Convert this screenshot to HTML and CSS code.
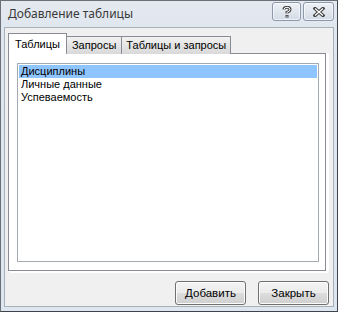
FILE: index.html
```
<html lang="ru">
  <head>
    <title>Добавление таблицы</title>
    <meta charset="utf-8">
    <link rel="stylesheet" href="styles.css">
  </head>
  <body>
    <div class="window">
      <div class="titlebar">
        <span class="titlebar__text">Добавление таблицы</span>
        <div class="titlebar__buttons">
          <div class="capbtn capbtn--help">
            <svg width="10" height="12" viewBox="0 0 10 12">
              <path d="M2 3.6 Q2 1.3 5 1.3 Q8 1.3 8 3.6 Q8 5.3 5 6.3 V7.6" fill="none" stroke="#444" stroke-width="3"/>
              <rect x="3.5" y="9" width="3" height="2.5" fill="#444"/>
              <path d="M2 3.6 Q2 1.3 5 1.3 Q8 1.3 8 3.6 Q8 5.3 5 6.3 V7.6" fill="none" stroke="#fff" stroke-width="1"/>
              <rect x="4.5" y="9.8" width="1" height="1" fill="#fff"/>
            </svg>
          </div>
          <div class="capbtn capbtn--close">
            <svg width="12" height="10" viewBox="0 0 12 10">
              <path d="M2 1.5 L10 8.5 M10 1.5 L2 8.5" stroke="#444" stroke-width="3.4" stroke-linecap="square"/>
              <path d="M2 1.5 L10 8.5 M10 1.5 L2 8.5" stroke="#fff" stroke-width="1.2"/>
            </svg>
          </div>
        </div>
      </div>

      <div class="client">
        <ul class="tabs">
          <li class="tab tab--active">Таблицы</li>
          <li class="tab">Запросы</li>
          <li class="tab tab--last">Таблицы и запросы</li>
        </ul>

        <div class="panel">
          <ul class="list">
            <li class="list__item list__item--selected">Дисциплины</li>
            <li class="list__item">Личные данные</li>
            <li class="list__item">Успеваемость</li>
          </ul>
        </div>

        <div class="actions">
          <button class="btn">Добавить</button>
          <button class="btn">Закрыть</button>
        </div>
      </div>
    </div>
  </body>
</html>
```

FILE: styles.css
```
html, body {
  margin: 0;
  padding: 0;
}

body {
  width: 338px;
  height: 312px;
  background-color: #ffffff;
  font-family: "Liberation Sans", Arial, sans-serif;
  font-size: 11px;
  color: #000;
}

ul {
  list-style-type: none;
  margin: 0;
  padding: 0;
}

.window {
  box-sizing: border-box;
  width: 338px;
  height: 312px;
  border: 1px solid #3f444c;
  border-top-color: #6b7078;
  border-left-color: #6b7078;
  background: linear-gradient(#e4e9f0, #dfe6ee 40px, #dde5ee);
  display: flex;
  flex-direction: column;
}

.titlebar {
  height: 26px;
  display: flex;
  align-items: flex-start;
  padding-left: 7px;
}

.titlebar__text {
  font-family: "Noto Sans", "Open Sans", sans-serif;
  font-size: 12px;
  color: #3a3a3a;
  margin-top: 4px;
}

.titlebar__buttons {
  margin-left: auto;
  margin-right: 3px;
  display: flex;
  gap: 2px;
  margin-top: 1px;
}

.capbtn {
  box-sizing: border-box;
  height: 19px;
  border: 1px solid #8c99aa;
  border-radius: 3px;
  background: linear-gradient(#eef2f7, #e1e7ee 50%, #d3dbe5);
  display: flex;
  align-items: center;
  justify-content: center;
  box-shadow: inset 0 0 0 1px rgba(255, 255, 255, 0.6);
}

.capbtn--help {
  width: 29px;
}

.capbtn--close {
  width: 31px;
}

.client {
  box-sizing: border-box;
  height: 280px;
  margin: 0 3px 0 3px;
  border: 1px solid #a7b1bd;
  background-color: #f0f0f0;
  padding: 5px 3px 0 3px;
}

.tabs {
  display: flex;
  align-items: flex-end;
  height: 20px;
  position: relative;
  z-index: 1;
}

.tab {
  box-sizing: border-box;
  height: 18px;
  padding: 0 5px;
  border: 1px solid #898c95;
  border-bottom: none;
  border-left: none;
  background: linear-gradient(#f2f2f2, #e4e4e4 50%, #d9d9d9);
  line-height: 17px;
  margin-bottom: -1px;
}

.tab--active {
  height: 21px;
  padding: 0 6px 0 6px;
  border-left: 1px solid #898c95;
  background: #ffffff;
  line-height: 20px;
  margin-bottom: -1px;
}

.tab--last {
  padding: 0 4px 0 4px;
}

.panel {
  box-sizing: border-box;
  width: 318px;
  height: 218px;
  border: 1px solid #898c95;
  background-color: #ffffff;
  padding: 9px 6px 8px 8px;
  box-shadow: 1px 1px 0 #fff, 2px 2px 0 #fff, 3px 0 0 #fff;
}

.list {
  box-sizing: border-box;
  height: 199px;
  border: 1px solid #a5abb3;
  padding: 1px;
}

.list__item {
  height: 13px;
  line-height: 13px;
  padding-left: 2px;
}

.list__item--selected {
  background-color: #8fc5ff;
}

.actions {
  display: flex;
  justify-content: flex-end;
  gap: 12px;
  margin-top: 10px;
  padding-right: 1px;
}

.btn {
  box-sizing: border-box;
  width: 71px;
  height: 24px;
  border: 1px solid #707070;
  border-radius: 3px;
  background: linear-gradient(#f3f3f3, #ebebeb 50%, #dddddd 51%, #cfcfcf);
  box-shadow: inset 0 0 0 1px #fbfbfb;
  font-family: "Liberation Sans", Arial, sans-serif;
  font-size: 11.5px;
  color: #000;
  padding: 0;
}
```
